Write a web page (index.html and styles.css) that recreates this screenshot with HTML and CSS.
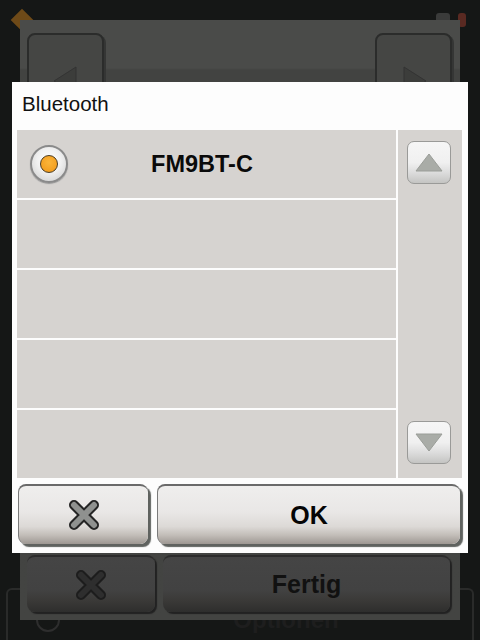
FILE: index.html
```html
<!DOCTYPE html>
<html>
<head>
<meta charset="utf-8">
<link rel="stylesheet" href="styles.css">
</head>
<body>
<div class="screen">
  <div class="base">
    <div class="topbar">
      <span class="diamond"></span>
      <span class="topbar-fill"></span>
      <span class="tiny-icon"></span>
      <span class="tiny-icon red"></span>
    </div>
    <div class="base-spacer"></div>
    <div class="base-row">
      <span class="base-radio"></span>
      <span class="base-label">Optionen</span>
    </div>
  </div>

  <div class="panel">
    <div class="panel-top">
      <div class="nav-btn">
        <svg width="40" height="40" viewBox="0 0 40 40"><polygon points="30,6 30,34 8,20" fill="#3c3d3b" stroke="#333" stroke-width="1"/></svg>
      </div>
      <div class="nav-btn">
        <svg width="40" height="40" viewBox="0 0 40 40"><polygon points="10,6 10,34 32,20" fill="#3c3d3b" stroke="#333" stroke-width="1"/></svg>
      </div>
    </div>
    <div class="panel-spacer"></div>
    <div class="panel-bottom">
      <div class="dark-btn cancel">
        <svg width="32" height="32" viewBox="0 0 32 32">
          <g stroke-linecap="round">
            <path d="M6 6 L26 26 M26 6 L6 26" stroke="#1d1d1d" stroke-width="10"/>
            <path d="M6 6 L26 26 M26 6 L6 26" stroke="#2e2e2e" stroke-width="6"/>
          </g>
        </svg>
      </div>
      <div class="dark-btn done">Fertig</div>
    </div>
  </div>

  <div class="dialog">
    <div class="dialog-title">Bluetooth</div>
    <div class="list-area">
      <div class="list">
        <div class="row">
          <span class="radio"><span class="radio-dot"></span></span>
          <span class="row-label">FM9BT-C</span>
        </div>
        <div class="row"></div>
        <div class="row"></div>
        <div class="row"></div>
        <div class="row"></div>
      </div>
      <div class="scroll">
        <div class="scroll-btn">
          <svg width="28" height="19" viewBox="0 0 28 19"><polygon points="14,1 27,18 1,18" fill="#a9aca7" stroke="#9a9d98" stroke-width="1"/></svg>
        </div>
        <div class="scroll-btn">
          <svg width="28" height="19" viewBox="0 0 28 19"><polygon points="1,1 27,1 14,18" fill="#a9aca7" stroke="#9a9d98" stroke-width="1"/></svg>
        </div>
      </div>
    </div>
    <div class="dialog-buttons">
      <div class="btn btn-cancel">
        <svg width="34" height="34" viewBox="0 0 34 34">
          <g stroke-linecap="round">
            <path d="M7 7 L27 27 M27 7 L7 27" stroke="#242424" stroke-width="10"/>
            <path d="M7 7 L27 27 M27 7 L7 27" stroke="#8f918f" stroke-width="6"/>
          </g>
        </svg>
      </div>
      <div class="btn btn-ok">OK</div>
    </div>
  </div>
</div>
</body>
</html>
```

FILE: styles.css
```css
* { box-sizing: border-box; }
html, body { margin: 0; padding: 0; }
body {
  width: 480px;
  height: 640px;
  background: #151716;
  font-family: "Liberation Sans", Arial, sans-serif;
  overflow: hidden;
}
.screen {
  position: relative;
  width: 480px;
  height: 640px;
}

/* base screen (dimmed, mostly hidden) */
.base {
  display: flex;
  flex-direction: column;
  width: 480px;
  height: 640px;
  padding: 8px 6px 0 6px;
}
.topbar {
  display: flex;
  align-items: center;
  gap: 8px;
  height: 24px;
}
.diamond {
  width: 16px;
  height: 16px;
  margin-left: 8px;
  background: #6e4a18;
  transform: rotate(45deg);
}
.topbar-fill { flex: 1; }
.tiny-icon {
  width: 14px;
  height: 14px;
  border-radius: 3px;
  background: #3a3b3a;
}
.tiny-icon.red { background: #5a2a22; width: 8px; margin-right: 8px; }
.base-spacer { flex: 1; }
.base-row {
  display: flex;
  align-items: center;
  gap: 40px;
  height: 52px;
  margin-top: -2px;
  border: 2px solid #2a2b2a;
  border-bottom: none;
  border-radius: 6px 6px 0 0;
  padding: 10px 0 0 28px;
}
.base-radio {
  width: 24px;
  height: 24px;
  border-radius: 50%;
  border: 2px solid #2e2e2e;
}
.base-label {
  flex: 1;
  text-align: center;
  color: #1e1e1e;
  font-weight: bold;
  font-size: 24px;
}

/* dimmed panel */
.panel {
  position: absolute;
  left: 20px;
  top: 20px;
  width: 440px;
  height: 600px;
  background: linear-gradient(#4a4b49 0, #4a4b49 48px, #424341 50px, #434442 100%);
  display: flex;
  flex-direction: column;
  padding: 13px 8px 8px 7px;
}
.panel-top {
  display: flex;
  justify-content: space-between;
}
.nav-btn {
  width: 77px;
  height: 76px;
  border: 2px solid #2b2c2b;
  border-radius: 8px;
  background: #454644;
  box-shadow: 2px 2px 0 #353635;
  display: flex;
  align-items: center;
  justify-content: center;
}
.nav-btn svg { margin-top: 20px; }
.panel-spacer { flex: 1; }
.panel-bottom {
  display: flex;
  gap: 8px;
  height: 57px;
}
.dark-btn {
  height: 57px;
  border-radius: 8px;
  border-top: 2px solid #2c2c2c;
  background: linear-gradient(#454545 0, #424242 60%, #3a3937 80%, #2e2e2d 100%);
  box-shadow: 2px 2px 1px #222;
  display: flex;
  align-items: center;
  justify-content: center;
}
.cancel { width: 128px; }
.done {
  width: 287px;
  color: #111;
  font-weight: bold;
  font-size: 25px;
}

/* dialog */
.dialog {
  position: absolute;
  left: 12px;
  top: 82px;
  width: 456px;
  height: 471px;
  background: #fdfdfd;
  display: flex;
  flex-direction: column;
  padding: 0 6px 0 5px;
}
.dialog-title {
  height: 48px;
  padding: 10px 0 0 5px;
  font-size: 20.5px;
  color: #111;
}
.list-area {
  display: flex;
  gap: 2px;
  height: 348px;
}
.list {
  width: 379px;
  display: flex;
  flex-direction: column;
  gap: 2px;
}
.row {
  height: 68px;
  background: #d6d3d0;
  display: flex;
  align-items: center;
}
.radio {
  width: 38px;
  height: 38px;
  margin-left: 13px;
  border-radius: 50%;
  background: radial-gradient(circle at 50% 40%, #ffffff 0, #f0f0f0 45%, #c9c9c9 100%);
  border: 2px solid #8a8a8a;
  box-shadow: 0 1px 1px #999;
  display: flex;
  align-items: center;
  justify-content: center;
}
.radio-dot {
  width: 18px;
  height: 18px;
  border-radius: 50%;
  background: radial-gradient(circle at 50% 40%, #fbb53a 0, #f4a021 70%, #d98a10 100%);
  border: 1.5px solid #4a3a20;
}
.row-label {
  flex: 1;
  text-align: center;
  margin-right: 60px;
  font-weight: bold;
  font-size: 23.5px;
  color: #0a0a0a;
}
.scroll {
  flex: 1;
  background: #d6d3d0;
  display: flex;
  flex-direction: column;
  justify-content: space-between;
  padding: 11px 0 14px 9px;
}
.scroll-btn {
  width: 44px;
  height: 43px;
  border-radius: 7px;
  border: 1.5px solid #9a9a98;
  background: linear-gradient(#f6f6f6 0, #f0f0f0 50%, #dcdcdc 75%, #c4c4c2 100%);
  display: flex;
  align-items: center;
  justify-content: center;
}
.dialog-buttons {
  display: flex;
  gap: 9px;
  margin-top: 6px;
  padding-left: 1px;
}
.btn {
  height: 60px;
  border-radius: 8px;
  border-top: 2px solid #6a6a6a;
  border-left: 1px solid #7a7a7a;
  background: linear-gradient(#efeeed 0, #e9e7e6 45%, #dcd9d6 70%, #c2bdb8 85%, #9d9792 100%);
  box-shadow: 3px 3px 1px #5f625f;
  display: flex;
  align-items: center;
  justify-content: center;
}
.btn-cancel { width: 130px; }
.btn-ok {
  width: 303px;
  font-weight: bold;
  font-size: 25px;
  color: #050505;
}
```
